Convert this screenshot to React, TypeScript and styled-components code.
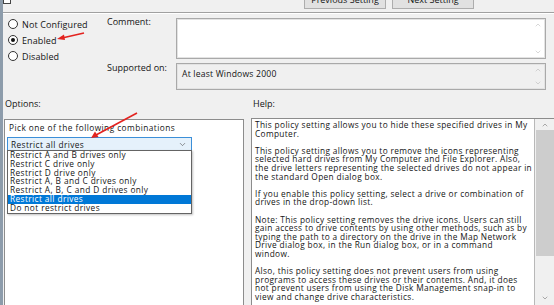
import React from 'react';
import styled, { createGlobalStyle } from 'styled-components';
import { ChevronDown, ChevronUp } from 'lucide-react';

const GlobalStyle = createGlobalStyle`
  html, body {
    margin: 0;
    padding: 0;
    background: #f0f0f0;
  }
  body {
    font-family: 'Open Sans', 'Noto Sans', sans-serif;
  }
`;

const drives = [
    'Restrict A and B drives only',
    'Restrict C drive only',
    'Restrict D drive only',
    'Restrict A, B and C drives only',
    'Restrict A, B, C and D drives only',
    'Restrict all drives',
    'Do not restrict drives',
];

// help text keeps the line breaks of the dialog
const helpText = [
    ['This policy setting allows you to hide these specified drives in My', 'Computer.'],
    [
        'This policy setting allows you to remove the icons representing',
        'selected hard drives from My Computer and File Explorer. Also,',
        'the drive letters representing the selected drives do not appear in',
        'the standard Open dialog box.',
    ],
    ['If you enable this policy setting, select a drive or combination of', 'drives in the drop-down list.'],
    [
        'Note: This policy setting removes the drive icons. Users can still',
        'gain access to drive contents by using other methods, such as by',
        'typing the path to a directory on the drive in the Map Network',
        'Drive dialog box, in the Run dialog box, or in a command',
        'window.',
    ],
    [
        'Also, this policy setting does not prevent users from using',
        'programs to access these drives or their contents. And, it does',
        'not prevent users from using the Disk Management snap-in to',
        'view and change drive characteristics.',
    ],
];

export default function App(): JSX.Element {
    return (
        <>
            <GlobalStyle />
            <Dialog>
                <TopBar>
                    <StateBox />
                    <NavButtons>
                        <NavButton>Previous Setting</NavButton>
                        <NavButton>Next Setting</NavButton>
                    </NavButtons>
                </TopBar>

                <UpperRow>
                    <RadioGroup>
                        <RadioRow>
                            <RadioDot />
                            <span>Not Configured</span>
                        </RadioRow>
                        <RadioRow>
                            <RadioDot checked />
                            <span>Enabled</span>
                        </RadioRow>
                        <RadioRow>
                            <RadioDot />
                            <span>Disabled</span>
                        </RadioRow>
                    </RadioGroup>
                    <FieldsGrid>
                        <FieldLabel>Comment:</FieldLabel>
                        <TextBox>
                            <BoxScroll>
                                <ChevronUp size={8} strokeWidth={1.5} />
                                <ChevronDown size={8} strokeWidth={1.5} />
                            </BoxScroll>
                        </TextBox>
                        <FieldLabel>Supported on:</FieldLabel>
                        <TextBox readOnly>
                            <BoxText>At least Windows 2000</BoxText>
                            <BoxScroll>
                                <ChevronUp size={8} strokeWidth={1.5} />
                                <ChevronDown size={8} strokeWidth={1.5} />
                            </BoxScroll>
                        </TextBox>
                    </FieldsGrid>
                </UpperRow>

                <LowerGrid>
                    <SectionLabel>Options:</SectionLabel>
                    <SectionLabel>Help:</SectionLabel>
                    <OptionsPanel>
                        <PickLabel>Pick one of the following combinations</PickLabel>
                        <SelectWrap>
                            <SelectBox>
                                <span>Restrict all drives</span>
                                <ChevronDown size={9} strokeWidth={1.5} color="#444" />
                            </SelectBox>
                            <DropList>
                                {drives.map((d) => (
                                    <DropItem key={d} selected={d === 'Restrict all drives'}>
                                        {d}
                                    </DropItem>
                                ))}
                            </DropList>
                        </SelectWrap>
                    </OptionsPanel>
                    <HelpPanel>
                        <HelpText>
                            {helpText.map((para, i) => (
                                <HelpPara key={i}>
                                    {para.map((line) => (
                                        <div key={line}>{line}</div>
                                    ))}
                                </HelpPara>
                            ))}
                        </HelpText>
                        <ScrollBar>
                            <ChevronUp size={8} strokeWidth={1.5} color="#606060" />
                            <Thumb />
                            <ChevronDown size={8} strokeWidth={1.5} color="#606060" />
                        </ScrollBar>
                    </HelpPanel>
                </LowerGrid>

                <Marks viewBox="0 0 554 305">
                    <line x1="84" y1="33" x2="62" y2="38" />
                    <polygon points="57,39 64,34.5 65,40" />
                    <line x1="137" y1="113" x2="96" y2="135" />
                    <polygon points="91,138 95,131.5 98.5,137" />
                </Marks>
            </Dialog>
        </>
    );
}

const Dialog = styled.div`
    position: relative;
    width: 554px;
    height: 305px;
    box-sizing: border-box;
    overflow: hidden;
    display: flex;
    flex-direction: column;
    background: #f0f0f0;
    border-left: 3px solid #8d9cab;
    color: #141414;
    font-family: 'Open Sans', 'Noto Sans', sans-serif;
    font-size: 9px;
`;

const TopBar = styled.div`
    display: flex;
    align-items: flex-end;
    height: 12px;
    flex-shrink: 0;
    border-bottom: 1px solid #a0a0a0;
    box-shadow: 0 1px 0 #ffffff;
`;

const StateBox = styled.div`
    align-self: flex-start;
    width: 6px;
    height: 10px;
    margin-top: -8px;
    border: 1px solid #444;
    background: #fff;
`;

const NavButtons = styled.div`
    display: flex;
    gap: 6px;
    margin-left: auto;
    margin-right: 80px;
    margin-bottom: 3px;
`;

const NavButton = styled.div`
    width: 82px;
    height: 20px;
    box-sizing: border-box;
    display: flex;
    align-items: center;
    justify-content: center;
    background: #e1e1e1;
    border: 1px solid #adadad;
    font-size: 9px;
`;

const UpperRow = styled.div`
    display: flex;
    margin-top: 1px;
    height: 77px;
    flex-shrink: 0;
`;

const RadioGroup = styled.div`
    width: 104px;
    box-sizing: border-box;
    padding: 2px 0 0 5px;
    display: flex;
    flex-direction: column;
`;

const RadioRow = styled.div`
    height: 16px;
    display: flex;
    align-items: center;
    gap: 4px;
    letter-spacing: 0.1px;
`;

const RadioDot = styled.span<{ checked?: boolean }>`
    width: 10px;
    height: 10px;
    box-sizing: border-box;
    border-radius: 50%;
    border: 1px solid #333;
    background: #fff;
    display: flex;
    align-items: center;
    justify-content: center;

    &::after {
        content: '';
        width: 4px;
        height: 4px;
        border-radius: 50%;
        background: ${(p) => (p.checked ? '#111' : 'transparent')};
    }
`;

const FieldsGrid = styled.div`
    display: grid;
    grid-template-columns: 69px 370px;
    grid-template-rows: 43px 28px;
    row-gap: 3px;
    padding-top: 3px;
`;

const FieldLabel = styled.div`
    line-height: 9px;
`;

const TextBox = styled.div<{ readOnly?: boolean }>`
    display: flex;
    box-sizing: border-box;
    height: ${(p) => (p.readOnly ? '27px' : '41px')};
    margin-top: ${(p) => (p.readOnly ? '0' : '1px')};
    background: ${(p) => (p.readOnly ? '#f0f0f0' : '#ffffff')};
    border: 1px solid #a9a9a9;
    outline: 1px solid #e3e3e3;
    outline-offset: -2px;
`;

const BoxText = styled.div`
    flex: 1;
    padding: 4px 0 0 5px;
    font-size: 8.6px;
    letter-spacing: 0.2px;
`;

const BoxScroll = styled.div`
    margin-left: auto;
    width: 14px;
    display: flex;
    flex-direction: column;
    justify-content: space-between;
    align-items: center;
    padding: 2px 0;
    color: #b0b0b0;
`;

const LowerGrid = styled.div`
    flex: 1;
    min-height: 0;
    display: grid;
    grid-template-columns: 248px 1fr;
    grid-template-rows: 27px 1fr;
`;

const SectionLabel = styled.div`
    padding: 8px 0 0 2px;
    line-height: 9px;
`;

const OptionsPanel = styled.div`
    margin: 1px 0 0 1px;
    width: 240px;
    height: 200px;
    box-sizing: border-box;
    background: #ffffff;
    border: 1px solid #8c8c8c;
`;

const PickLabel = styled.div`
    padding: 3px 0 0 4px;
    line-height: 9px;
    font-size: 8.3px;
    letter-spacing: 0.45px;
    white-space: nowrap;
`;

const SelectWrap = styled.div`
    position: relative;
    margin: 5px 0 0 2px;
    width: 185px;
`;

const SelectBox = styled.div`
    height: 14px;
    box-sizing: border-box;
    display: flex;
    align-items: center;
    justify-content: space-between;
    padding: 0 4px 0 3px;
    background: #e5f1fb;
    border: 1px solid #3c8fd8;
    font-size: 8.3px;
    letter-spacing: 0.4px;
`;

const DropList = styled.div`
    position: absolute;
    top: 13px;
    left: 0;
    width: 185px;
    box-sizing: border-box;
    background: #ffffff;
    border: 1px solid #646464;
    box-shadow: 1px 1px 2px rgba(0, 0, 0, 0.25);
`;

const DropItem = styled.div<{ selected?: boolean }>`
    height: 8.8px;
    line-height: 8.8px;
    padding-left: 2px;
    font-size: 8.3px;
    letter-spacing: 0.4px;
    white-space: nowrap;
    background: ${(p) => (p.selected ? '#0078d7' : 'transparent')};
    color: ${(p) => (p.selected ? '#ffffff' : '#141414')};
`;

const HelpPanel = styled.div`
    display: flex;
    height: 200px;
    box-sizing: border-box;
    border: 1px solid #8c8c8c;
    border-right: none;
`;

const HelpText = styled.div`
    width: 283px;
    box-sizing: border-box;
    padding: 2px 0 0 3px;
    background: #ffffff;
    border-right: 1px solid #b8b8b8;
    font-size: 8.3px;
    line-height: 8.6px;
    letter-spacing: 0.35px;
    white-space: nowrap;
    overflow: hidden;
`;

const HelpPara = styled.div`
    margin-bottom: 8.6px;
`;

const ScrollBar = styled.div`
    flex: 1;
    display: flex;
    flex-direction: column;
    align-items: center;
    background: #f0f0f0;
    padding-top: 2px;

    svg:last-child {
        margin-top: auto;
        margin-bottom: 15px;
    }
`;

const Thumb = styled.div`
    align-self: stretch;
    margin: 1px 0 0 1px;
    height: 126px;
    background: #cdcdcd;
`;

const Marks = styled.svg`
    position: absolute;
    left: -3px;
    top: 0;
    width: 554px;
    height: 305px;
    pointer-events: none;

    line {
        stroke: #e3231f;
        stroke-width: 1.6;
    }
    polygon {
        fill: #e3231f;
    }
`;
